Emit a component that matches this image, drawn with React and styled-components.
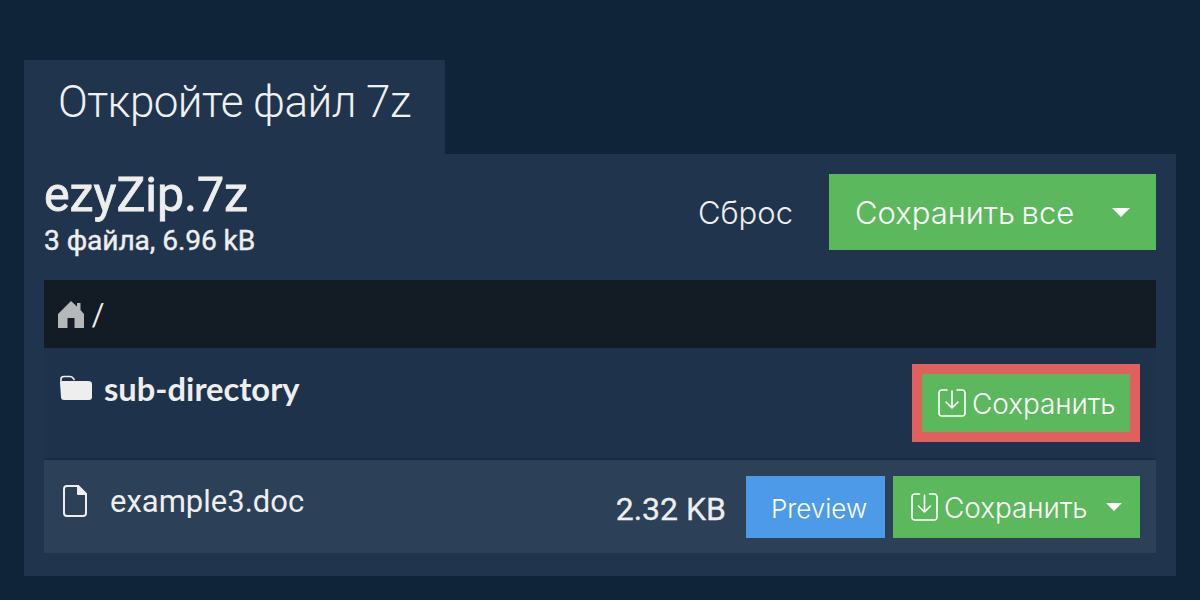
import React from 'react'
import styled, { createGlobalStyle } from 'styled-components'

const Global = createGlobalStyle`
html, body {
  margin: 0;
  padding: 0;
  background: #0f2439;
  color: #eeeeee;
  font-family: "Inter", "Liberation Sans", sans-serif;
}
`

const Page = styled.div`
width: 1200px;
height: 600px;
box-sizing: border-box;
padding: 60px 24px 24px;
overflow: hidden;
`

const Tab = styled.div`
width: 421px;
height: 94px;
box-sizing: border-box;
padding: 16px 0 0 34px;
background: #20354d;
font-family: "Roboto", sans-serif;
font-weight: 300;
font-size: 44px;
line-height: 52px;
letter-spacing: -0.55px;
color: #f0f0f0;
`

const Panel = styled.div`
height: 422px;
box-sizing: border-box;
padding: 20px;
background: #20354d;
`

const Header = styled.div`
height: 76px;
display: flex;
align-items: flex-start;
justify-content: space-between;
margin-bottom: 30px;
`

const FileInfo = styled.div`
display: flex;
flex-direction: column;
gap: 6px;
margin-top: -3px;
`

const Name = styled.h1`
margin: 0;
font-family: "Roboto", sans-serif;
font-weight: 400;
font-size: 48.3px;
line-height: 48px;
color: #eeeeee;
-webkit-text-stroke: 0.8px #eeeeee;
`

const Meta = styled.div`
font-family: "Roboto", sans-serif;
font-weight: 400;
font-size: 28.2px;
line-height: 32px;
letter-spacing: -0.1px;
color: #eeeeee;
-webkit-text-stroke: 0.4px #eeeeee;
`

const Actions = styled.div`
display: flex;
align-items: center;
gap: 36px;
`

const Reset = styled.span`
font-weight: 300;
font-size: 31px;
color: #eeeeee;
`

const Button = styled.div`
display: flex;
align-items: center;
box-sizing: border-box;
width: ${({ $w }) => $w}px;
height: ${({ $h }) => $h}px;
padding-left: ${({ $pad }) => $pad}px;
background: ${({ $blue }) => ($blue ? '#4d9be8' : '#5cb85c')};
color: #fff;
font-weight: 300;
font-size: ${({ $size }) => $size}px;
white-space: nowrap;
`

const SaveLabel = styled.span`
margin-left: 6px;
margin-top: 2px;
font-size: 28px;
letter-spacing: -0.1px;
`

const PreviewLabel = styled.span`
margin-top: 2px;
`

const AllLabel = styled.span`
font-size: 31px;
word-spacing: -2px;
`

const Caret = styled.i`
width: 0;
height: 0;
margin-left: auto;
margin-right: ${({ $right }) => $right}px;
border-left: ${({ $s }) => $s}px solid transparent;
border-right: ${({ $s }) => $s}px solid transparent;
border-top: ${({ $s }) => $s}px solid #fff;
`

const PathBar = styled.div`
height: 68px;
display: flex;
align-items: center;
gap: 6px;
padding-left: 13px;
background: #131b24;
font-family: "Lato", sans-serif;
font-size: 30px;
color: #eeeeee;
`

const FolderRow = styled.div`
height: 112px;
box-sizing: border-box;
padding: 16px 16px 0;
display: flex;
align-items: flex-start;
justify-content: space-between;
background: #1e334b;
border-bottom: 2px solid #1a2c41;
`

const FolderName = styled.div`
display: flex;
align-items: center;
gap: 12px;
height: 48px;
font-family: "Lato", sans-serif;
font-weight: 700;
font-size: 32.7px;
color: #eeeeee;
`

const Highlight = styled.div`
border: 10px solid #e0605e;
`

const FileRow = styled.div`
height: 95px;
box-sizing: border-box;
padding: 16px 16px 0 19px;
display: flex;
align-items: flex-start;
background: #2c4057;
border-bottom: 2px solid #22344a;
`

const FileName = styled.div`
display: flex;
align-items: center;
gap: 23px;
height: 50px;
font-family: "Roboto", sans-serif;
font-size: 31px;
color: #eeeeee;
`

const Size = styled.div`
margin-left: auto;
margin-right: 20px;
height: 66px;
line-height: 66px;
font-family: "Roboto", sans-serif;
font-weight: 400;
font-size: 32px;
color: #eeeeee;
-webkit-text-stroke: 0.3px #eeeeee;
`

const Buttons = styled.div`
display: flex;
gap: 8px;
`

const HomeIcon = () => (
  <svg width="28" height="28" viewBox="0 0 28 28" fill="#b4b8bb">
    <path d="M14 1 L20 6.5 V3 H23.5 V10 L27 14 V28 H17.5 V18 H10.5 V28 H1 V14 Z" />
  </svg>
)

const FolderIcon = () => (
  <svg width="32" height="26" viewBox="0 0 32 26">
    <path d="M1 8 V4 Q1 1.5 4 1.5 H10 Q12 1.5 13 3 L14.5 5" fill="none" stroke="#eeeeee" strokeWidth="1.6" />
    <path d="M0 8 Q0 6 3 6 H28 Q32 6 32 9 V22 Q32 25 29 25 H4 Q1 25 1 22 Z" fill="#eeeeee" />
  </svg>
)

const FileIcon = () => (
  <svg width="24" height="32" viewBox="0 0 24 32" fill="none" stroke="#eeeeee" strokeWidth="2" strokeLinejoin="round">
    <path d="M4 1 H15 L23 9 V28 Q23 31 20 31 H4 Q1 31 1 28 V4 Q1 1 4 1 Z" />
    <path d="M15 1 L23 9 H15 Z" fill="#eeeeee" />
  </svg>
)

const SaveIcon = ({ w = 28, h = 28 }) => (
  <svg width={w} height={h} viewBox={`0 0 ${w} ${h}`} fill="none" stroke="#fff" strokeWidth="1.6" strokeLinecap="round" strokeLinejoin="round">
    <path d={`M${w / 2 - 5} 1 H4 Q1 1 1 4 V${h - 4} Q1 ${h - 1} 4 ${h - 1} H${w - 4} Q${w - 1} ${h - 1} ${w - 1} ${h - 4} V4 Q${w - 1} 1 ${w - 4} 1 H${w / 2 + 5}`} />
    <path d={`M${w / 2} 2 V${h / 2 + 5} M${w / 2 - 6} ${h / 2 - 1} L${w / 2} ${h / 2 + 5} L${w / 2 + 6} ${h / 2 - 1}`} />
  </svg>
)

const App = () => {
  return (
    <Page>
      <Global />
      <Tab>Откройте файл 7z</Tab>
      <Panel>
        <Header>
          <FileInfo>
            <Name>ezyZip.7z</Name>
            <Meta>3 файла, 6.96 kB</Meta>
          </FileInfo>
          <Actions>
            <Reset>Сброс</Reset>
            <Button $w={327} $h={76} $pad={26} $size={30}>
              <AllLabel>Сохранить все</AllLabel>
              <Caret $s={9} $right={26} />
            </Button>
          </Actions>
        </Header>
        <PathBar>
          <HomeIcon />
          /
        </PathBar>
        <FolderRow>
          <FolderName>
            <FolderIcon />
            sub-directory
          </FolderName>
          <Highlight>
            <Button $w={208} $h={58} $pad={16} $size={26}>
              <SaveIcon />
              <SaveLabel>Сохранить</SaveLabel>
            </Button>
          </Highlight>
        </FolderRow>
        <FileRow>
          <FileName>
            <FileIcon />
            example3.doc
          </FileName>
          <Size>2.32 KB</Size>
          <Buttons>
            <Button $blue $w={139} $h={62} $pad={25} $size={26}>
              <PreviewLabel>Preview</PreviewLabel>
            </Button>
            <Button $w={247} $h={62} $pad={18} $size={26}>
              <SaveIcon w={27} h={28} />
              <SaveLabel>Сохранить</SaveLabel>
              <Caret $s={8.5} $right={18} />
            </Button>
          </Buttons>
        </FileRow>
      </Panel>
    </Page>
  )
}

export default App
